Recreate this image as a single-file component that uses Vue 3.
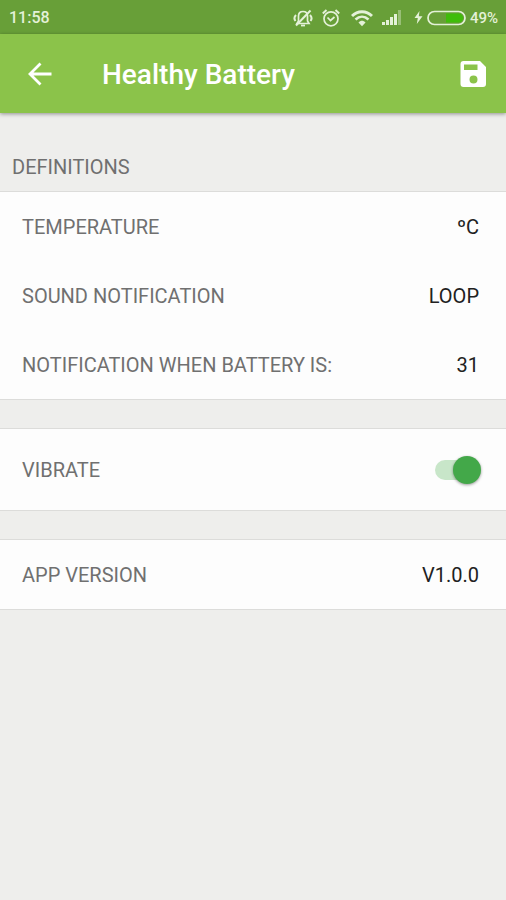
<template>
  <div class="screen">
    <div class="status-bar">
      <span class="clock">11:58</span>
      <div class="status-icons">
        <svg class="icon-mute" width="20" height="20" viewBox="0 0 20 20" fill="none" stroke="currentColor">
          <path d="M5.500 13V8C5.500 5 7.500 3.500 10 3.500S14.500 5 14.500 8V13L16 15.500H4Z" stroke-width="1.700" />
          <path d="M8 17.500H12" stroke-width="1.800" />
          <path d="M3 7C1 9 1 11 2.500 13M17 7C19 9 19 11 17.500 13" stroke-width="2" />
          <path d="M3 17.500L17.500 2.500" stroke-width="2" />
        </svg>
        <svg width="20" height="20" viewBox="0 0 20 20" fill="none" stroke="currentColor">
          <circle cx="10" cy="10.800" r="7" stroke-width="1.700" />
          <path d="M6.500 9.500L9.500 12.500L13.500 9" stroke-width="1.700" />
          <path d="M1.800 5.500L5.500 2M18.200 5.500L14.500 2" stroke-width="2" />
        </svg>
        <svg class="icon-wifi" width="22" height="18" viewBox="0 0 22 18" fill="none" stroke="currentColor">
          <path d="M1 7C6.500 1.300 15.500 1.300 21 7" stroke-width="2.800" />
          <path d="M4.500 10.500C8.500 6.800 13.500 6.800 17.500 10.500" stroke-width="2.600" />
          <path d="M7.500 13.500C9.500 11.300 12.500 11.300 14.500 13.500L11 17.300Z" fill="currentColor" stroke="none" />
        </svg>
        <svg class="icon-signal" width="20" height="15" viewBox="0 0 20 15" fill="currentColor">
          <path d="M0 12H3V15H0ZM4 10H7V15H4ZM8 7H11V15H8ZM12 4H15V15H12Z" />
          <path d="M16 0H19V15H16Z" opacity="0.400" />
        </svg>
        <svg class="icon-bolt" width="9" height="13" viewBox="0 0 9 13" fill="currentColor">
          <path d="M5.500 0L0.500 7H3.800L2.800 13L8.500 5.200H4.800Z" />
        </svg>
        <svg width="39" height="16" viewBox="0 0 39 16">
          <rect x="1" y="1.500" width="37" height="13" rx="6.500" fill="none" stroke="currentColor" stroke-width="1.700" />
          <path d="M19 3.500H31.500A4.500 4.500 0 0 1 31.500 12.500H19Z" fill="#3fbd09" />
        </svg>
        <span class="percent">49%</span>
      </div>
    </div>

    <header class="toolbar">
      <button type="button" class="icon-btn" aria-label="Back">
        <svg width="24" height="24" viewBox="0 0 24 24" fill="none" stroke="currentColor" stroke-width="2.800">
          <path d="M23.500 12H2.500M12.500 1.500L2 12L12.500 22.500" />
        </svg>
      </button>
      <h1>Healthy Battery</h1>
      <button type="button" class="icon-btn" aria-label="Save">
        <svg width="28" height="28" viewBox="0 0 28 28" fill="currentColor">
          <path fill-rule="evenodd" d="M3.500 1H20L26 7V24A3 3 0 0 1 23 27H3.500A3 3 0 0 1 0.500 24V4A3 3 0 0 1 3.500 1ZM4 4.500V10H17.500V4.500ZM13.500 15.500A4 4 0 1 0 13.500 23.500A4 4 0 1 0 13.500 15.500Z" />
        </svg>
      </button>
    </header>

    <main>
      <h2>DEFINITIONS</h2>

      <section class="group">
        <div v-for="item in settings" :key="item.id" class="row">
          <span :id="item.id">{{ item.label }}</span>
          <button type="button" class="value" :aria-describedby="item.id">{{ item.value }}</button>
        </div>
      </section>

      <section class="group">
        <div class="row row-tall">
          <label for="vibrate">VIBRATE</label>
          <input id="vibrate" v-model="vibrate" type="checkbox" class="switch" />
        </div>
      </section>

      <section class="group">
        <div class="row">
          <span>APP VERSION</span>
          <span class="value">V1.0.0</span>
        </div>
      </section>
    </main>
  </div>
</template>

<script setup>
import { ref } from 'vue';

const vibrate = ref(true);

const settings = ref([
  { id: 'temperature', label: 'TEMPERATURE', value: 'ºC' },
  { id: 'sound', label: 'SOUND NOTIFICATION', value: 'LOOP' },
  { id: 'level', label: 'NOTIFICATION WHEN BATTERY IS:', value: '31' }
]);
</script>

<style>
body { background: #eeeeec; }
</style>

<style scoped>
.screen { min-height: 100vh; background: #eeeeec; font-family: Roboto, "Liberation Sans", sans-serif; font-size: 20px; color: #707070; }

.status-bar { display: flex; align-items: center; justify-content: space-between; height: 34px; padding: 1px 8px 0 9px; background: #689f38; color: #e4f1d8; font-size: 16px; font-weight: 500; box-sizing: border-box; }
.status-icons { display: flex; align-items: center; }
.icon-mute { margin-right: 8px; }
.icon-wifi { margin: 0 9px 0 10px; }
.icon-signal { margin-right: 12px; }
.icon-bolt { margin-right: 4px; }
.percent { margin-left: 4px; font-size: 15px; }

.toolbar { position: relative; display: flex; align-items: center; height: 79px; padding: 0 12px 0 20px; background: #8bc34a; color: #fff; box-shadow: 0 1px 4px rgba(0, 0, 0, 0.4); box-sizing: border-box; }
.toolbar h1 { flex: 1; margin: 0 0 0 42px; padding-top: 2px; font-size: 28px; font-weight: 500; line-height: 36px; }
.icon-btn { display: flex; align-items: center; justify-content: center; width: 40px; height: 40px; padding: 0; border: none; background: none; color: inherit; cursor: pointer; }

h2 { margin: 0; padding: 42px 12px 12px; font-size: 20px; font-weight: 400; line-height: 24px; }

.group { border-top: 1px solid #dcdcda; border-bottom: 1px solid #dcdcda; background: #fdfdfd; }
.group + .group { margin-top: 28px; }
.row { display: flex; align-items: center; justify-content: space-between; height: 69px; padding: 0 27px 0 22px; }
.row-tall { height: 81px; padding-right: 25px; }
.value { padding: 0; border: none; background: none; font: inherit; color: #212121; }
button.value { cursor: pointer; }

.switch { position: relative; appearance: none; width: 46px; height: 28px; margin: 0; cursor: pointer; }
.switch::before { content: ""; position: absolute; top: 4px; left: 0; width: 40px; height: 20px; border-radius: 10px; background: #c4c4c4; }
.switch::after { content: ""; position: absolute; top: 0; left: 0; width: 28px; height: 28px; border-radius: 50%; background: #fafafa; box-shadow: 0 1px 3px rgba(0, 0, 0, 0.4); }
.switch:checked::before { background: #c8e6c9; }
.switch:checked::after { left: 18px; background: #43a849; }
</style>
